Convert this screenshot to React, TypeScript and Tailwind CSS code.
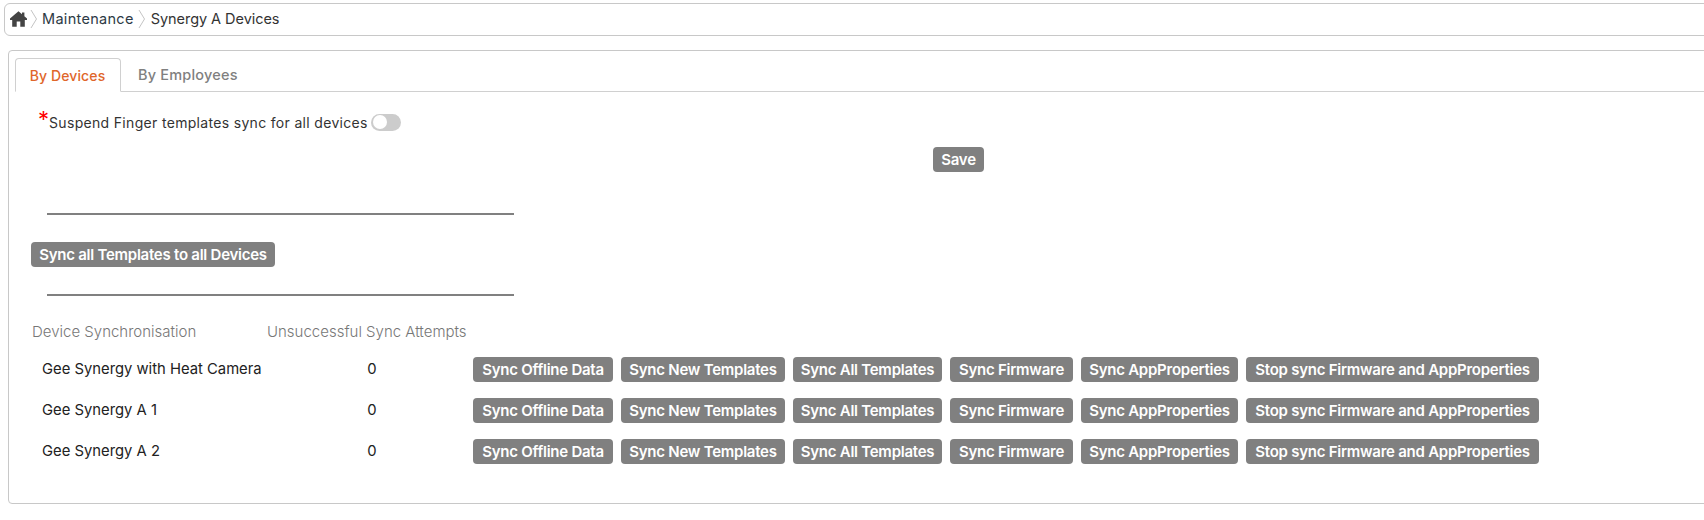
// Synergy A device sync screen: breadcrumb, tabs, suspend toggle, per-device sync actions.

const ROW_ACTIONS = [
  { label: "Sync Offline Data", width: "w-[140px]" },
  { label: "Sync New Templates", width: "w-[164px]" },
  { label: "Sync All Templates", width: "w-[149px]" },
  { label: "Sync Firmware", width: "w-[123px]" },
  { label: "Sync AppProperties", width: "w-[157px]" },
  { label: "Stop sync Firmware and AppProperties", width: "w-[293px]" },
];

const DEVICES = ["Gee Synergy with Heat Camera", "Gee Synergy A 1", "Gee Synergy A 2"];

const GrayButton = ({ label, width }: { label: string; width: string }) => (
  <button className={`${width} h-[25px] shrink-0 rounded-[4px] bg-[#808080] text-center text-[15px] font-semibold leading-[25px] tracking-[-0.25px] whitespace-nowrap text-white`}>
    {label}
  </button>
);

const Chevron = () => (
  <svg width="8" height="24" viewBox="0 0 8 24" fill="none" className="shrink-0">
    <path d="M1 3l5.5 9L1 21" stroke="#c4c4c4" strokeWidth="1" />
  </svg>
);

const HomeGlyph = () => (
  <svg width="17" height="16" viewBox="0 0 17 16" className="shrink-0">
    <path
      fill="#444"
      d="M8.5 0.3 L12 3.2 V1.5 H14.4 V5.2 L17 7.6 V8.9 H14.8 V15.8 H10.3 V10.4 H6.7 V15.8 H2.2 V8.9 H0 V7.6 Z"
    />
  </svg>
);

export default function App() {
  return (
    <div className="min-h-[520px] w-[1704px] overflow-hidden bg-white font-['Inter',sans-serif] text-[#333]">
      {/* Breadcrumb */}
      <div className="mt-[3px] ml-[4px] flex h-[33px] w-[1720px] items-center rounded-[6px] border border-[#c8c8c8] pb-[2px] pl-[5px]">
        <HomeGlyph />
        <span className="ml-[3px]"><Chevron /></span>
        <span className="ml-[4px] text-[14.5px] tracking-[0.3px] text-[#2d3a45]">Maintenance</span>
        <span className="ml-[4px]"><Chevron /></span>
        <span className="ml-[5px] text-[14.5px] tracking-[-0.05px] text-[#333]">Synergy A Devices</span>
      </div>

      {/* Card */}
      <div className="mt-[14px] ml-[8px] h-[454px] w-[1720px] rounded-[4px] border border-[#c8c8c8] pt-[7px] pl-[6px]">
        <div className="flex h-[34px] items-end border-b border-[#d0d0d0]">
          <div className="-mb-px flex h-[34px] w-[106px] items-center justify-center rounded-t-[4px] border border-b-white border-[#d0d0d0] bg-white pr-[1px] text-[14px] font-medium tracking-[0.12px] whitespace-nowrap text-[#e0662a]">
            By Devices
          </div>
          <div className="ml-[17px] flex h-[33px] items-center text-[14.5px] font-medium tracking-[0.2px] whitespace-nowrap text-[#808080]">
            By Employees
          </div>
        </div>

        <div className="mt-[16px] ml-[23px] flex h-[28px] items-center">
          <span className="-mt-[6px] text-[22px] leading-none text-[#ff0000]">*</span>
          <span className="text-[14px] tracking-[0.32px] whitespace-nowrap text-[#333]">Suspend Finger templates sync for all devices</span>
          <span className="ml-[3px] flex h-[17px] w-[30px] items-center rounded-full bg-[#cccccc] pl-[2px]">
            <span className="h-[14px] w-[14px] rounded-full bg-white" />
          </span>
        </div>

        <div className="mt-[11px] ml-[918px]">
          <GrayButton label="Save" width="w-[51px]" />
        </div>

        <div className="mt-[41px] ml-[32px] h-[2px] w-[467px] bg-[#808080]" />

        <div className="mt-[27px] ml-[16px]">
          <GrayButton label="Sync all Templates to all Devices" width="w-[244px]" />
        </div>

        <div className="mt-[27px] ml-[32px] h-[2px] w-[467px] bg-[#808080]" />

        {/* Device table */}
        <div className="mt-[26px] flex h-[20px] items-center text-[15px] font-light text-[#777]">
          <span className="ml-[17px] w-[235px]">Device Synchronisation</span>
          <span>Unsuccessful Sync Attempts</span>
        </div>
        <div className="mt-[15px] flex flex-col gap-[16px]">
          {DEVICES.map((device) => (
            <div key={device} className="flex h-[25px] items-center">
              <span className="ml-[27px] w-[316px] text-[14.8px] text-[#222]">{device}</span>
              <span className="w-[28px] text-center text-[14.8px] text-[#222]">0</span>
              <div className="ml-[87px] flex gap-[8px]">
                {ROW_ACTIONS.map((action) => (
                  <GrayButton key={action.label} label={action.label} width={action.width} />
                ))}
              </div>
            </div>
          ))}
        </div>
      </div>
    </div>
  );
}
